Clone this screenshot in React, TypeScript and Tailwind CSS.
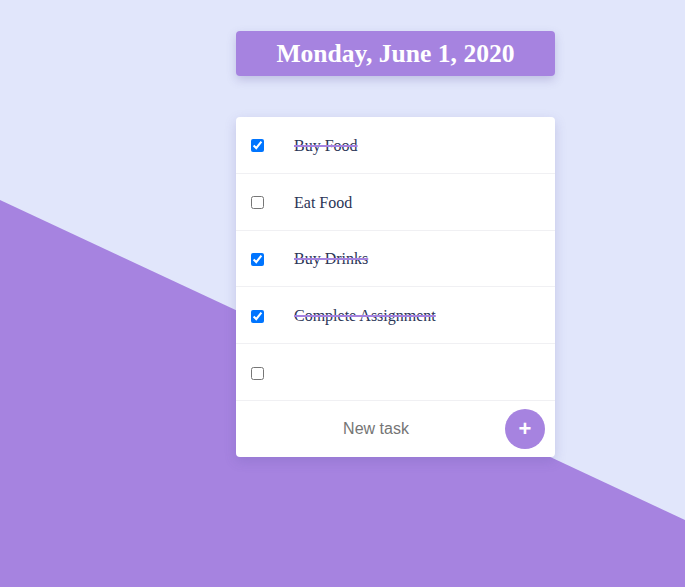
import React from "react";

const tasks = [
  { text: "Buy Food", done: true },
  { text: "Eat Food", done: false },
  { text: "Buy Drinks", done: true },
  { text: "Complete Assignment", done: true },
  { text: "", done: false },
];

export default function App() {
  return (
    <div className="relative h-[587px] w-full overflow-hidden bg-[#e1e6fb]">
      <div className="absolute inset-0 bg-[#a683e0] [clip-path:polygon(0_200px,100%_520px,100%_100%,0_100%)]" />
      <div className="relative z-10 ml-[236px] w-[319px] pt-[31px]">
        <div className="flex h-[45px] items-center justify-center rounded-[4px] bg-[#a683e0] shadow-[0_4px_10px_rgba(90,80,160,0.25)]">
          <h1 className="font-['Liberation_Serif',serif] text-[25.6px] font-bold text-white leading-none">
            Monday, June 1, 2020
          </h1>
        </div>
        <div className="mt-[41px] overflow-hidden rounded-[4px] bg-white shadow-[0_4px_12px_rgba(90,80,160,0.22)]">
          {tasks.map((t, i) => (
            <div
              key={i}
              className="flex h-[56.8px] items-center border-b border-[#f0f0f3] pl-[15px] pt-[2px]"
            >
              <input
                type="checkbox"
                defaultChecked={t.done}
                className="m-0 h-[13px] w-[13px]"
              />
              <span
                className={
                  "ml-[30px] font-['Liberation_Serif',serif] text-[16px] text-[#2b3556] " +
                  (t.done
                    ? "line-through decoration-[#a683e0] decoration-2"
                    : "")
                }
              >
                {t.text}
              </span>
            </div>
          ))}
          <div className="flex h-[56px] items-center pr-[10px]">
            <input
              type="text"
              placeholder="New task"
              className="ml-[11px] min-w-0 flex-1 bg-transparent text-center font-['Liberation_Sans',sans-serif] text-[16px] outline-none placeholder:text-[#757575]"
            />
            <button className="flex h-[40px] w-[40px] items-center justify-center rounded-full bg-[#a683e0] font-['Liberation_Sans',sans-serif] text-[22px] font-bold leading-none text-white">
              +
            </button>
          </div>
        </div>
      </div>
    </div>
  );
}
